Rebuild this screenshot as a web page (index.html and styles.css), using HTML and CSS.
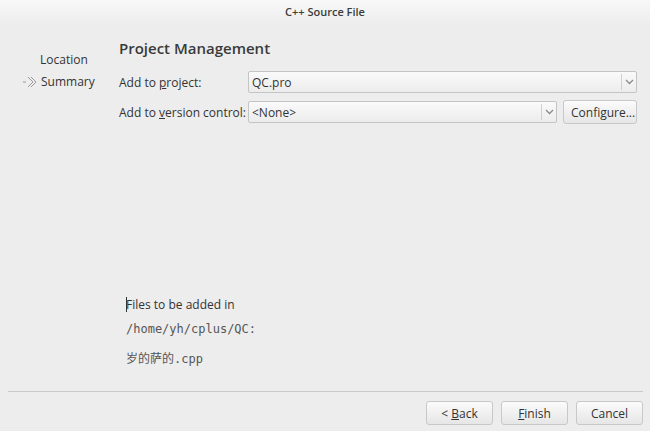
FILE: index.html
```html
<!DOCTYPE html>
<html>
  <head>
    <title>C++ Source File</title>
    <link rel="stylesheet" href="styles.css">
  </head>
  <body>
    <div class="titlebar">C++ Source File</div>

    <div class="main">
      <ul class="steps">
        <li class="step">Location</li>
        <li class="step current">
          <svg class="arrow" width="16" height="12" viewBox="0 0 16 12">
            <path d="M1 6h3M6 1l5 5-5 5M9 1l5 5-5 5" fill="none" stroke="#9a9a9a" stroke-width="1"/>
          </svg>
          Summary
        </li>
      </ul>

      <div class="page">
        <h1>Project Management</h1>

        <div class="form-row">
          <label>Add to <u>p</u>roject:</label>
          <div class="combo wide">
            <span class="value">QC.pro</span>
            <span class="drop"><svg width="9" height="6" viewBox="0 0 9 6"><path d="M1 1l3.5 3.5L8 1" fill="none" stroke="#8a8a8a" stroke-width="1.3"/></svg></span>
          </div>
        </div>

        <div class="form-row">
          <label>Add to <u>v</u>ersion control:</label>
          <div class="combo">
            <span class="value">&lt;None&gt;</span>
            <span class="drop"><svg width="9" height="6" viewBox="0 0 9 6"><path d="M1 1l3.5 3.5L8 1" fill="none" stroke="#8a8a8a" stroke-width="1.3"/></svg></span>
          </div>
          <button class="btn configure">Configure...</button>
        </div>

        <div class="files">
          <p class="caption"><span class="caret"></span>Files to be added in</p>
          <p class="mono">/home/yh/cplus/QC:</p>
          <p class="mono cjk">岁的萨的.cpp</p>
        </div>
      </div>
    </div>

    <div class="footer">
      <button class="btn">&lt; <u>B</u>ack</button>
      <button class="btn"><u>F</u>inish</button>
      <button class="btn">Cancel</button>
    </div>
  </body>
</html>
```

FILE: styles.css
```css
html,
body {
  margin: 0;
  height: 100%;
}

body {
  background-color: #ededed;
  font-family: "Open Sans", "Noto Sans CJK SC", sans-serif;
  font-size: 12px;
  color: #333;
  display: flex;
  flex-direction: column;
}

.titlebar {
  height: 27px;
  line-height: 24px;
  text-align: center;
  font-weight: 600;
  font-size: 11px;
  color: #3c3c3c;
  background: linear-gradient(#f8f8f8, #ececec);
}

.main {
  flex: 1;
  display: flex;
}

.steps {
  list-style: none;
  margin: 0;
  padding: 22px 0 0 0;
  width: 119px;
}

.step {
  height: 22px;
  line-height: 22px;
  padding-left: 40px;
}

.step.current {
  padding-left: 22px;
  display: flex;
  align-items: center;
}

.arrow {
  margin-right: 3px;
}

.page {
  flex: 1;
  display: flex;
  flex-direction: column;
  padding-right: 13px;
}

h1 {
  font-size: 15px;
  font-weight: 600;
  color: #3a3a3a;
  margin: 11px 0 9px 0;
  height: 20px;
}

.form-row {
  display: flex;
  align-items: center;
  height: 30px;
}

.form-row label {
  width: 129px;
  white-space: nowrap;
}

.combo {
  flex: 1;
  height: 20px;
  display: flex;
  align-items: center;
  border: 1px solid #c4c4c4;
  border-radius: 2px;
  background: linear-gradient(#fafafa, #ececec);
}

.combo .value {
  flex: 1;
  padding-left: 3px;
}

.drop {
  width: 14px;
  height: 16px;
  border-left: 1px solid #d0d0d0;
  display: flex;
  align-items: center;
  justify-content: center;
}

.btn {
  font-family: "Open Sans", sans-serif;
  font-size: 12px;
  color: #333;
  height: 24px;
  padding: 0 7px;
  border: 1px solid #c8c8c8;
  border-radius: 3px;
  background: linear-gradient(#fbfbfb, #e6e6e6);
}

.configure {
  margin-left: 6px;
  width: 74px;
}

.files {
  margin-top: 165px;
  padding-left: 7px;
}

.files p {
  margin: 0;
  height: 25px;
  line-height: 25px;
}

.caption {
  position: relative;
}

.caret {
  position: absolute;
  left: 0;
  top: 5px;
  width: 1px;
  height: 15px;
  background: #2e3436;
}

.mono {
  font-family: "DejaVu Sans Mono", "Noto Sans CJK SC", monospace;
  color: #555;
}

.files .cjk {
  margin-top: 5px;
}

.footer {
  margin: 0 7px 0 8px;
  border-top: 1px solid #c9c9c9;
  padding: 9px 0 6px 0;
  display: flex;
  justify-content: flex-end;
  gap: 8px;
}

.footer .btn {
  width: 67px;
}
```
